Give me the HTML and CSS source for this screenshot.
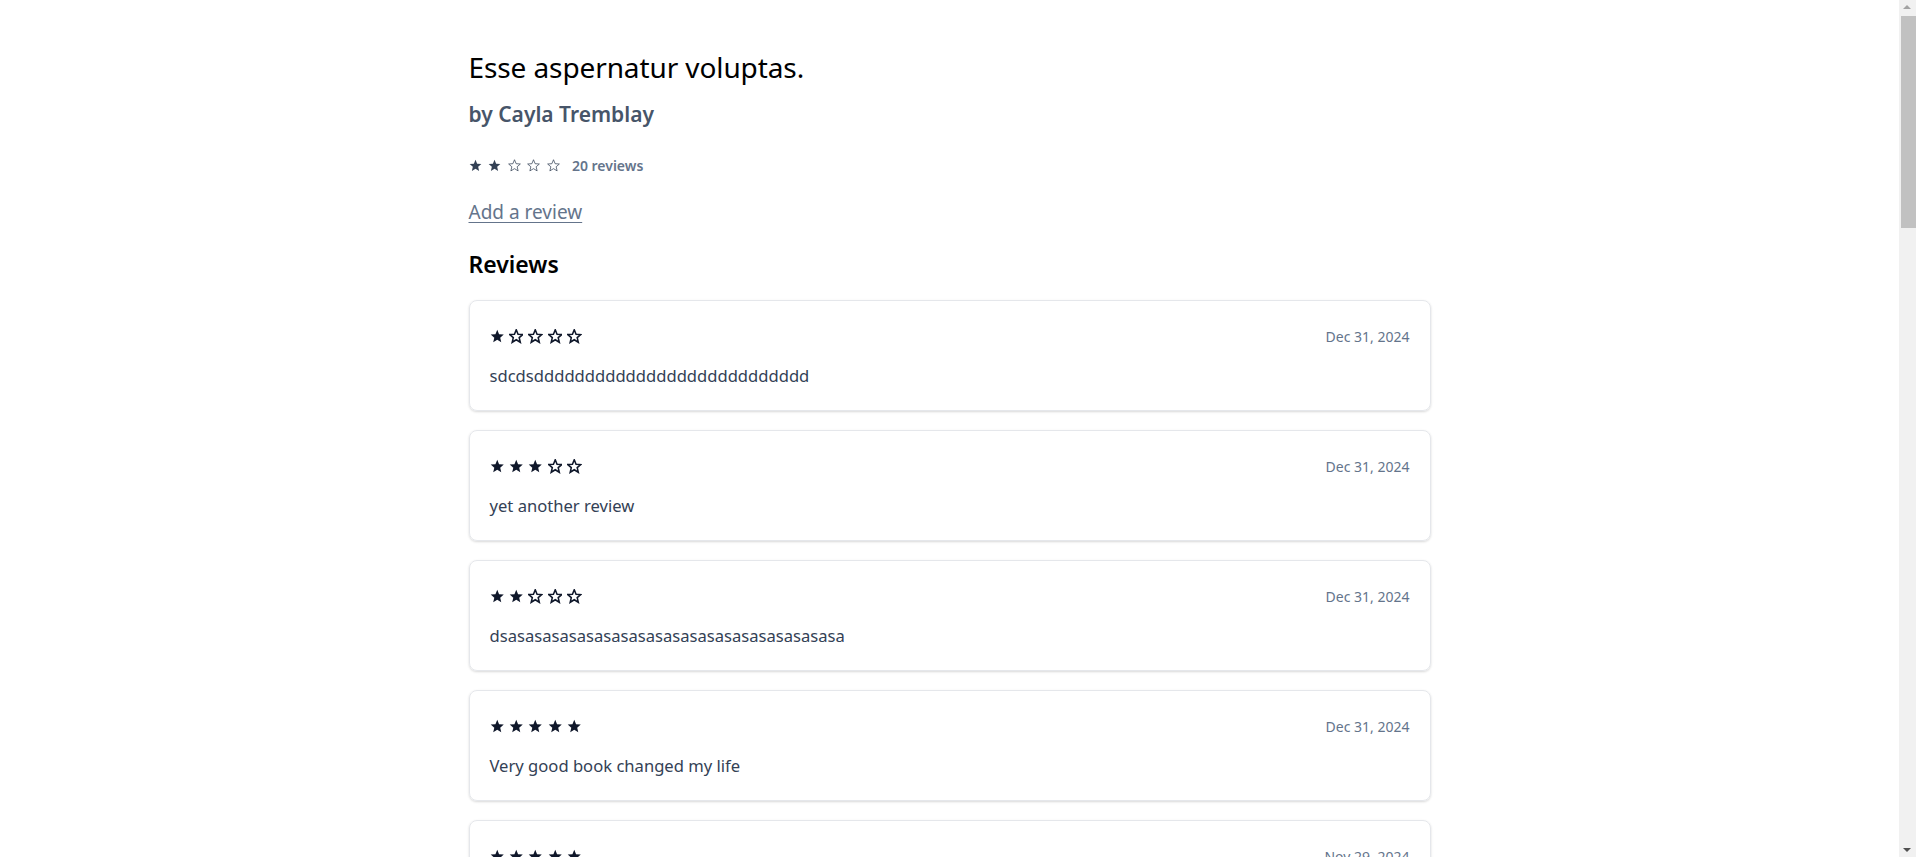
FILE: index.html
```html
<!DOCTYPE html>
<html lang="en">
<head>
<meta charset="utf-8">
<title>Esse aspernatur voluptas.</title>
<link rel="stylesheet" href="styles.css">
</head>
<body>
<svg width="0" height="0" class="defs" aria-hidden="true">
  <defs>
    <path id="star" d="M7 0.8 L8.75 5.05 L13.3 5.4 L9.85 8.35 L10.9 12.8 L7 10.4 L3.1 12.8 L4.15 8.35 L0.7 5.4 L5.25 5.05 Z"/>
  </defs>
</svg>
<main class="page">
  <h1 class="title">Esse aspernatur voluptas.</h1>
  <h2 class="author">by Cayla Tremblay</h2>
  <div class="summary">
    <span class="stars stars-sm">
      <svg class="s full" viewBox="0 0 14 14"><use href="#star"/></svg>
      <svg class="s full" viewBox="0 0 14 14"><use href="#star"/></svg>
      <svg class="s empty" viewBox="0 0 14 14"><use href="#star"/></svg>
      <svg class="s empty" viewBox="0 0 14 14"><use href="#star"/></svg>
      <svg class="s empty" viewBox="0 0 14 14"><use href="#star"/></svg>
    </span>
    <span class="count">20 reviews</span>
  </div>
  <a class="add" href="#">Add a review</a>
  <h3 class="reviews-title">Reviews</h3>
  <div class="list" id="list"></div>
</main>
<div class="scrollbar" aria-hidden="true">
  <span class="arrow up"></span>
  <span class="thumb"></span>
  <span class="arrow down"></span>
</div>
<script src="app.js"></script>
</body>
</html>
```
FILE: app.js
```js
const reviews = [
  [1, "Dec 31, 2024", "sdcdsddddddddddddddddddddddddddd"],
  [3, "Dec 31, 2024", "yet another review"],
  [2, "Dec 31, 2024", "dsasasasasasasasasasasasasasasasasasasasa"],
  [5, "Dec 31, 2024", "Very good book changed my life"],
  [5, "Nov 29, 2024", "Quia voluptatem et aut corrupti."],
  [2, "Nov 12, 2024", "Dolorem ipsam rerum et molestiae."],
  [1, "Oct 30, 2024", "Nihil sed ut officiis qui."],
  [3, "Oct 18, 2024", "Consequatur eum voluptas est."],
  [2, "Sep 27, 2024", "Aut ut sit quos eos repellendus."],
  [4, "Sep 02, 2024", "Magnam quod tempora et in."],
  [1, "Aug 21, 2024", "Eveniet est natus fugit nobis."],
  [2, "Aug 04, 2024", "Est aut sint quia inventore."],
  [3, "Jul 15, 2024", "Officia non nesciunt et illo."],
  [1, "Jun 30, 2024", "Rerum est voluptatem iusto."],
  [2, "Jun 11, 2024", "Sed laborum perferendis ut."],
  [1, "May 26, 2024", "Ut dolores quia aliquid aut."],
  [2, "May 03, 2024", "Minima eos quo sapiente."],
  [3, "Apr 19, 2024", "Ipsa voluptas placeat ut."],
  [1, "Mar 31, 2024", "Et eum harum fuga distinctio."],
  [2, "Mar 08, 2024", "Qui error accusamus est."]
];
const list = document.getElementById('list');
const star = (cls) => '<svg class="s ' + cls + '" viewBox="0 0 14 14"><use href="#star"/></svg>';
list.innerHTML = reviews.map(([n, d, t]) => {
  let s = '';
  for (let i = 0; i < 5; i++) s += star(i < n ? 'full' : 'empty');
  return '<article class="card"><div class="card-head"><span class="stars stars-md">' + s +
    '</span><time class="date">' + d + '</time></div><p class="text">' + t + '</p></article>';
}).join('');
```
FILE: styles.css
```css
*, *::before, *::after { box-sizing: border-box; }
html, body { margin: 0; padding: 0; background: #fff; }
body {
  font-family: "Segoe UI", "Noto Sans", "Open Sans", sans-serif;
  color: #000;
  padding-right: 17px;
}
.defs { position: absolute; width: 0; height: 0; }
.page {
  width: 962px;
  margin: 0 auto;
  padding: 49px 0 400px;
  display: flex;
  flex-direction: column;
  align-items: flex-start;
}
.title {
  margin: 0;
  font-size: 28px;
  font-weight: 400;
  line-height: 36px;
  letter-spacing: -0.1px;
}
.author {
  margin: 15px 0 0;
  font-size: 21px;
  font-weight: 600;
  line-height: 28px;
  color: #475569;
}
.summary {
  margin-top: 27px;
  display: flex;
  align-items: center;
  gap: 12px;
  height: 20px;
}
.stars { display: inline-flex; align-items: center; }
.s { display: block; flex: none; }
.stars-sm .s { width: 13px; height: 13px; margin-right: 6.6px; }
.stars-sm .s:last-child { margin-right: 0; }
.stars-sm .full { fill: #334155; }
.stars-sm .empty { fill: none; stroke: #334155; stroke-width: 0.8; }
.count {
  font-size: 14px;
  font-weight: 600;
  color: #64748b;
}
.add {
  margin-top: 24px;
  font-size: 19px;
  line-height: 26px;
  color: #64748b;
  text-decoration: underline;
  text-underline-offset: 3px;
}
.reviews-title {
  margin: 24px 0 0;
  font-size: 23px;
  font-weight: 600;
  line-height: 30px;
}
.list {
  margin-top: 21px;
  width: 100%;
  display: flex;
  flex-direction: column;
  gap: 19px;
}
.card {
  border: 1px solid #e5e7eb;
  border-radius: 8px;
  box-shadow: 0 1px 3px rgba(0,0,0,0.1), 0 1px 2px rgba(0,0,0,0.06);
  padding: 22px 20px 0;
  height: 111px;
  display: flex;
  flex-direction: column;
  gap: 14px;
}
.card-head {
  display: flex;
  justify-content: space-between;
  align-items: center;
  height: 27px;
}
.stars-md .s { width: 14.5px; height: 14.5px; margin-right: 4.9px; }
.stars-md .s:last-child { margin-right: 0; }
.stars-md .full { fill: #0f172a; }
.stars-md .empty { fill: none; stroke: #0f172a; stroke-width: 1.5; }
.date {
  font-size: 14px;
  line-height: 20px;
  color: #64748b;
}
.text {
  margin: 0;
  font-size: 16.6px;
  line-height: 24px;
  color: #334155;
}
.scrollbar {
  position: fixed;
  top: 0;
  right: 0;
  width: 17px;
  height: 100vh;
  background: #f1f1f1;
}
.thumb {
  position: absolute;
  left: 2px;
  right: 0;
  top: 16px;
  height: 212px;
  background: #c1c1c1;
}
.arrow {
  position: absolute;
  left: 4px;
  width: 0;
  height: 0;
  border-left: 4.5px solid transparent;
  border-right: 4.5px solid transparent;
}
.arrow.up { top: 5px; border-bottom: 4px solid #a3a3a3; }
.arrow.down { bottom: 5px; border-top: 4px solid #505050; }
```
